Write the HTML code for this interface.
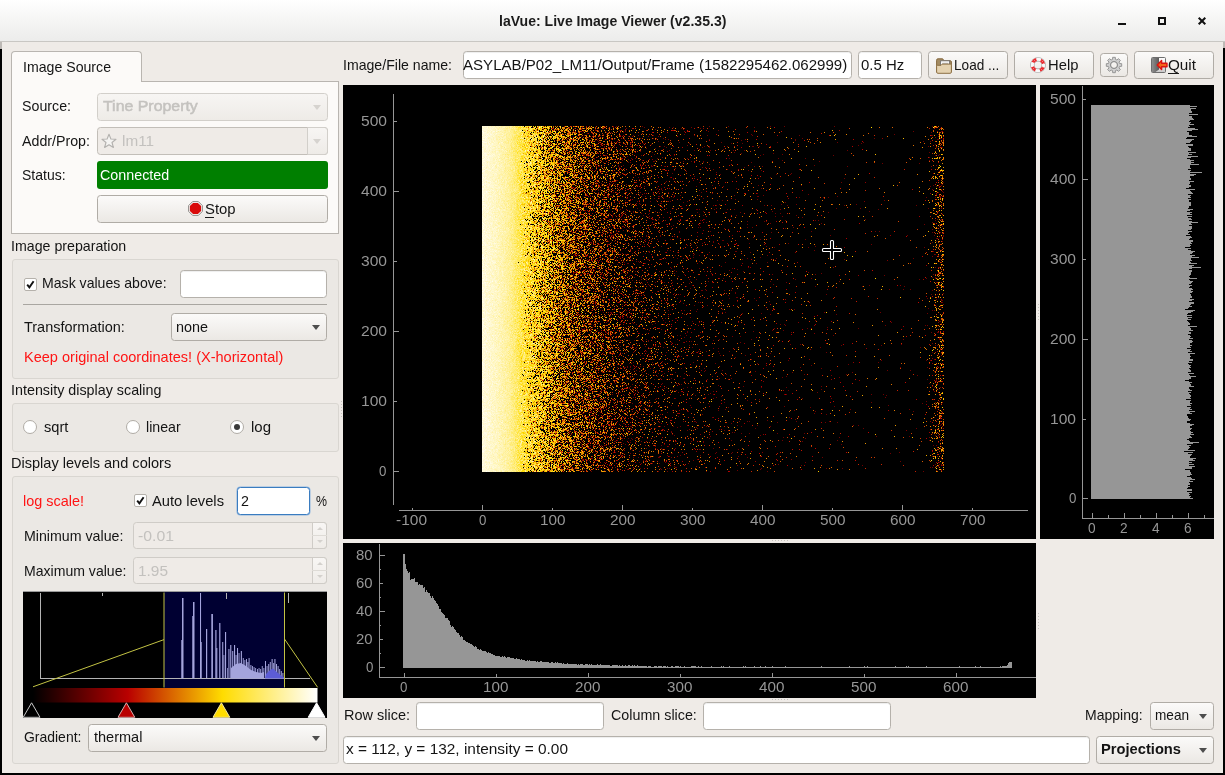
<!DOCTYPE html>
<html><head><meta charset="utf-8"><title>laVue</title>
<style>
html,body{margin:0;padding:0}
body{width:1225px;height:775px;overflow:hidden;background:#efebe7;position:relative;font-family:"Liberation Sans",sans-serif;font-size:15px;line-height:18px}
.a{position:absolute;box-sizing:border-box}
.t{position:absolute;white-space:pre;line-height:18px;height:18px;transform-origin:0 50%;display:inline-block}
.t u{text-decoration:underline;text-underline-offset:2px;text-decoration-thickness:1px}
.btn{position:absolute;box-sizing:border-box;border:1px solid #b0aca6;border-radius:3.5px;background:linear-gradient(#fbfaf9,#ebe8e4)}
.btn.dis{border-color:#d2cfca;background:linear-gradient(#f7f5f3,#eeebe7)}
.le{position:absolute;box-sizing:border-box;border:1px solid #b5b1ab;border-radius:3.5px;background:#fff;box-shadow:inset 0 1px 1px rgba(0,0,0,0.07)}
.gb{position:absolute;box-sizing:border-box;border:1px solid #d9d6d1;border-radius:3px;background:#ebe8e4}
.pl{position:absolute;background:#000}
.arr{position:absolute;width:0;height:0;border-left:4.5px solid transparent;border-right:4.5px solid transparent;border-top:5px solid #4d4d4d}
.arr.dis{border-top-color:#d6d3cf}
.sb{-webkit-text-stroke:0.5px #c4c2bf}
svg{position:absolute;overflow:visible}
</style></head>
<body>
<div class='a' style='left:0;top:0;width:1225px;height:41px;background:linear-gradient(#ffffff,#f6f6f5 45%,#ececeb)'></div>
<div class='a' style='left:0;top:41px;width:1225px;height:1px;background:#c9c7c3'></div>
<div class='a' style='left:0;top:42px;width:2px;height:7px;background:#bdb9b5'></div>
<div class='a' style='left:1223px;top:42px;width:2px;height:6px;background:#bdb9b5'></div>
<div class='a' style='left:0;top:49px;width:2px;height:726px;background:#000'></div>
<div class='a' style='left:1223px;top:48px;width:2px;height:727px;background:#000'></div>
<div class='a' style='left:0;top:773px;width:1225px;height:2px;background:#000'></div>
<div class='a' style='left:1118px;top:23px;width:8px;height:2px;background:#111'></div>
<div class='a' style='left:1158px;top:17px;width:8px;height:8px;border:2px solid #111'></div>
<svg style='left:1198px;top:17px' width='8' height='8' viewBox='0 0 8 8'><path d='M0.7 0.7L7.3 7.3M7.3 0.7L0.7 7.3' stroke='#111' stroke-width='2' fill='none'/></svg>
<div class='a' style='left:11px;top:81px;width:328px;height:153px;background:#fcfaf8;border:1px solid #b9b5b0'></div>
<div class='a' style='left:11px;top:51px;width:131px;height:31px;background:#fcfaf8;border:1px solid #b9b5b0;border-bottom:none;border-radius:4px 4px 0 0'></div>
<div class='btn dis' style='left:97px;top:93px;width:231px;height:28px;'></div>
<div class='arr dis' style='left:312.5px;top:104.5px'></div>
<div class='a' style='left:97px;top:127px;width:231px;height:28px;border:1px solid #c2beb8;border-radius:3.5px;background:#efebe7'></div>
<div class='btn dis' style='left:307px;top:127px;width:21px;height:28px;border-radius:0 3.5px 3.5px 0'></div>
<div class='arr dis' style='left:312.5px;top:138.5px'></div>
<svg style='left:101px;top:132.5px' width='16' height='16' viewBox='0 0 16 16'><path d='M8 1.2 L9.9 6 L15 6.3 L11 9.5 L12.4 14.5 L8 11.7 L3.6 14.5 L5 9.5 L1 6.3 L6.1 6 Z' fill='#f4f3f1' stroke='#b3b1ae' stroke-width='1.1' stroke-linejoin='round'/></svg>
<div class='a' style='left:97px;top:161px;width:231px;height:28px;background:#007f00;border-radius:3px'></div>
<div class='btn' style='left:97px;top:195px;width:231px;height:28px;'></div>
<svg style='left:188px;top:201px' width='15' height='15' viewBox='0 0 15 15'><path d='M4.6 0.6h5.8l4 4v5.8l-4 4H4.6l-4-4V4.6z' fill='#f4f2f0' stroke='#8f8c88' stroke-width='1'/><path d='M5.1 1.9h4.8l3.2 3.2v4.8l-3.2 3.2H5.1L1.9 9.9V5.1z' fill='#d90a0a'/></svg>
<div class='a' style='left:205px;top:217px;width:9px;height:1px;background:#1a1a1a'></div>
<div class='gb' style='left:12px;top:259px;width:327px;height:120px;'></div>
<div class='a' style='left:24px;top:278px;width:13px;height:13px;background:#fff;border:1px solid #b5b1ab;border-radius:2px'></div>
<svg style='left:26px;top:280px' width='9' height='9' viewBox='0 0 9 9'><path d='M1.2 4.6L3.4 7.4L7.6 1.2' stroke='#111' stroke-width='1.9' fill='none'/></svg>
<div class='le' style='left:180px;top:270px;width:147px;height:28px;'></div>
<div class='a' style='left:23px;top:304px;width:304px;height:1px;background:#a9a6a1'></div>
<div class='btn' style='left:171px;top:313px;width:156px;height:28px;'></div>
<div class='arr' style='left:311.5px;top:324.5px'></div>
<div class='gb' style='left:12px;top:403px;width:327px;height:49px;'></div>
<div class='a' style='left:23px;top:420px;width:14px;height:14px;border:1px solid #b0aca6;border-radius:50%;background:#fff'></div>
<div class='a' style='left:126px;top:420px;width:14px;height:14px;border:1px solid #b0aca6;border-radius:50%;background:#fff'></div>
<div class='a' style='left:230px;top:420px;width:14px;height:14px;border:1px solid #b0aca6;border-radius:50%;background:#fff'><div class='a' style='left:3px;top:3px;width:6px;height:6px;border-radius:50%;background:#3a3a3a'></div></div>
<div class='gb' style='left:12px;top:476px;width:327px;height:288px;'></div>
<div class='a' style='left:134px;top:494px;width:13px;height:13px;background:#fff;border:1px solid #b5b1ab;border-radius:2px'></div>
<svg style='left:136px;top:496px' width='9' height='9' viewBox='0 0 9 9'><path d='M1.2 4.6L3.4 7.4L7.6 1.2' stroke='#111' stroke-width='1.9' fill='none'/></svg>
<div class='le' style='left:237px;top:487px;width:73px;height:28px;border:1.5px solid #3a7cc0;box-shadow:0 0 0 0.5px #8db4de'></div>
<div class='a' style='left:133px;top:522px;width:194px;height:27px;border:1px solid #cfccc7;border-radius:3.5px;background:#efebe7'></div>
<div class='a' style='left:312px;top:522px;width:15px;height:27px;border:1px solid #cfccc7;border-radius:0 3.5px 3.5px 0;background:linear-gradient(#f8f6f4,#efece8)'></div>
<div class='a' style='left:312px;top:535px;width:15px;height:1px;background:#dedbd6'></div>
<div class='a' style='left:316.5px;top:527px;width:0;height:0;border-left:3px solid transparent;border-right:3px solid transparent;border-bottom:3.5px solid #d4d1cd'></div>
<div class='a' style='left:316.5px;top:540px;width:0;height:0;border-left:3px solid transparent;border-right:3px solid transparent;border-top:3.5px solid #d4d1cd'></div>
<div class='a' style='left:133px;top:557px;width:194px;height:27px;border:1px solid #cfccc7;border-radius:3.5px;background:#efebe7'></div>
<div class='a' style='left:312px;top:557px;width:15px;height:27px;border:1px solid #cfccc7;border-radius:0 3.5px 3.5px 0;background:linear-gradient(#f8f6f4,#efece8)'></div>
<div class='a' style='left:312px;top:570px;width:15px;height:1px;background:#dedbd6'></div>
<div class='a' style='left:316.5px;top:562px;width:0;height:0;border-left:3px solid transparent;border-right:3px solid transparent;border-bottom:3.5px solid #d4d1cd'></div>
<div class='a' style='left:316.5px;top:575px;width:0;height:0;border-left:3px solid transparent;border-right:3px solid transparent;border-top:3.5px solid #d4d1cd'></div>
<div class='btn' style='left:88px;top:724px;width:239px;height:28px;'></div>
<div class='arr' style='left:311.5px;top:735.5px'></div>
<div class='le' style='left:463px;top:51px;width:389px;height:28px;overflow:hidden'></div>
<div class='le' style='left:858px;top:51px;width:64px;height:28px;'></div>
<div class='btn' style='left:928px;top:51px;width:80px;height:28px;'></div>
<div class='btn' style='left:1014px;top:51px;width:80px;height:28px;'></div>
<div class='btn' style='left:1100px;top:53px;width:28px;height:24px;'></div>
<div class='btn' style='left:1134px;top:51px;width:80px;height:28px;'></div>
<div class='a' style='left:1168px;top:73px;width:11px;height:1px;background:#1a1a1a'></div>
<div class='pl' style='left:343px;top:85px;width:693px;height:454px;'></div>
<div class='pl' style='left:1040px;top:85px;width:174px;height:454px;'></div>
<div class='pl' style='left:343px;top:543px;width:693px;height:155px;'></div>
<div class='le' style='left:416px;top:702px;width:188px;height:28px;'></div>
<div class='le' style='left:703px;top:702px;width:188px;height:28px;'></div>
<div class='btn' style='left:1150px;top:702px;width:64px;height:28px;'></div>
<div class='arr' style='left:1198.5px;top:713.5px'></div>
<div class='le' style='left:343px;top:736px;width:747px;height:28px;'></div>
<div class='btn' style='left:1096px;top:736px;width:118px;height:28px;'></div>
<div class='arr' style='left:1198.5px;top:747.5px'></div>
<svg style='left:0px;top:0px' width='1225' height='775' viewBox='0 0 1225 775' shape-rendering='crispEdges'><path d='M393.5 94V505 M393 471.5H399 M393 401.5H397 M393 331.5H399 M393 261.5H397 M393 191.5H399 M393 121.5H397 M399 510.5H1028 M412.5 510V508 M482.5 510V505 M552.5 510V508 M622.5 510V505 M692.5 510V508 M762.5 510V505 M832.5 510V508 M902.5 510V505 M972.5 510V508' stroke='#969696' stroke-width='1' fill='none'/><path d='M1082.5 86V518.5H1214 M1082 498.5H1088 M1082 419.5H1086 M1082 339.5H1088 M1082 259.5H1086 M1082 179.5H1088 M1082 99.5H1086 M1092.5 518V513 M1108.5 518V515 M1124.5 518V513 M1140.5 518V515 M1156.5 518V513 M1172.5 518V515 M1188.5 518V513 M1204.5 518V515' stroke='#969696' stroke-width='1' fill='none'/><path d='M1091 499L1091 105L1190.2 105L1190.2 106L1197.3 106L1197.3 107L1190.3 107L1190.3 108L1196.2 108L1196.2 109L1191.3 109L1191.3 110L1191.0 110L1191.0 111L1191.5 111L1191.5 112L1191.5 112L1191.5 113L1189.1 113L1189.1 114L1197.7 114L1197.7 115L1188.9 115L1188.9 116L1191.6 116L1191.6 117L1191.6 117L1191.6 118L1192.7 118L1192.7 119L1193.7 119L1193.7 120L1190.4 120L1190.4 121L1189.2 121L1189.2 122L1191.3 122L1191.3 123L1189.6 123L1189.6 124L1193.6 124L1193.6 125L1188.7 125L1188.7 126L1189.6 126L1189.6 127L1187.6 127L1187.6 128L1195.3 128L1195.3 129L1198.4 129L1198.4 130L1192.2 130L1192.2 131L1187.4 131L1187.4 132L1189.0 132L1189.0 133L1188.7 133L1188.7 134L1189.3 134L1189.3 135L1192.4 135L1192.4 136L1196.7 136L1196.7 137L1187.2 137L1187.2 138L1186.2 138L1186.2 139L1193.9 139L1193.9 140L1192.3 140L1192.3 141L1191.0 141L1191.0 142L1189.6 142L1189.6 143L1185.9 143L1185.9 144L1192.8 144L1192.8 145L1192.9 145L1192.9 146L1188.4 146L1188.4 147L1189.1 147L1189.1 148L1191.4 148L1191.4 149L1191.2 149L1191.2 150L1191.4 150L1191.4 151L1188.2 151L1188.2 152L1195.8 152L1195.8 153L1189.0 153L1189.0 154L1192.2 154L1192.2 155L1188.1 155L1188.1 156L1198.4 156L1198.4 157L1191.2 157L1191.2 158L1187.0 158L1187.0 159L1189.8 159L1189.8 160L1193.8 160L1193.8 161L1190.7 161L1190.7 162L1193.9 162L1193.9 163L1190.9 163L1190.9 164L1199.1 164L1199.1 165L1189.7 165L1189.7 166L1189.8 166L1189.8 167L1189.9 167L1189.9 168L1191.1 168L1191.1 169L1187.5 169L1187.5 170L1190.9 170L1190.9 171L1190.1 171L1190.1 172L1202.2 172L1202.2 173L1189.5 173L1189.5 174L1196.0 174L1196.0 175L1193.9 175L1193.9 176L1190.0 176L1190.0 177L1189.7 177L1189.7 178L1191.2 178L1191.2 179L1190.7 179L1190.7 180L1188.9 180L1188.9 181L1193.8 181L1193.8 182L1190.1 182L1190.1 183L1190.3 183L1190.3 184L1189.2 184L1189.2 185L1190.8 185L1190.8 186L1190.5 186L1190.5 187L1188.8 187L1188.8 188L1186.3 188L1186.3 189L1194.7 189L1194.7 190L1190.1 190L1190.1 191L1190.6 191L1190.6 192L1191.5 192L1191.5 193L1193.1 193L1193.1 194L1188.4 194L1188.4 195L1190.6 195L1190.6 196L1189.7 196L1189.7 197L1191.0 197L1191.0 198L1187.5 198L1187.5 199L1190.7 199L1190.7 200L1188.8 200L1188.8 201L1188.9 201L1188.9 202L1191.4 202L1191.4 203L1190.8 203L1190.8 204L1191.1 204L1191.1 205L1190.7 205L1190.7 206L1189.4 206L1189.4 207L1189.4 207L1189.4 208L1188.1 208L1188.1 209L1192.8 209L1192.8 210L1189.9 210L1189.9 211L1187.1 211L1187.1 212L1191.7 212L1191.7 213L1190.3 213L1190.3 214L1191.8 214L1191.8 215L1187.2 215L1187.2 216L1192.1 216L1192.1 217L1188.1 217L1188.1 218L1190.9 218L1190.9 219L1192.1 219L1192.1 220L1189.3 220L1189.3 221L1192.2 221L1192.2 222L1198.0 222L1198.0 223L1191.2 223L1191.2 224L1192.0 224L1192.0 225L1189.3 225L1189.3 226L1192.1 226L1192.1 227L1192.0 227L1192.0 228L1191.7 228L1191.7 229L1190.6 229L1190.6 230L1188.2 230L1188.2 231L1191.9 231L1191.9 232L1189.3 232L1189.3 233L1187.6 233L1187.6 234L1190.0 234L1190.0 235L1186.1 235L1186.1 236L1190.8 236L1190.8 237L1191.5 237L1191.5 238L1189.8 238L1189.8 239L1188.9 239L1188.9 240L1193.3 240L1193.3 241L1192.6 241L1192.6 242L1191.4 242L1191.4 243L1191.8 243L1191.8 244L1189.6 244L1189.6 245L1191.4 245L1191.4 246L1190.0 246L1190.0 247L1184.9 247L1184.9 248L1190.6 248L1190.6 249L1188.3 249L1188.3 250L1191.1 250L1191.1 251L1194.9 251L1194.9 252L1192.7 252L1192.7 253L1191.7 253L1191.7 254L1190.4 254L1190.4 255L1194.8 255L1194.8 256L1192.2 256L1192.2 257L1198.6 257L1198.6 258L1191.0 258L1191.0 259L1191.4 259L1191.4 260L1191.5 260L1191.5 261L1190.1 261L1190.1 262L1191.1 262L1191.1 263L1196.7 263L1196.7 264L1189.4 264L1189.4 265L1193.9 265L1193.9 266L1192.0 266L1192.0 267L1201.0 267L1201.0 268L1191.9 268L1191.9 269L1189.0 269L1189.0 270L1192.0 270L1192.0 271L1191.6 271L1191.6 272L1190.5 272L1190.5 273L1191.2 273L1191.2 274L1190.5 274L1190.5 275L1190.2 275L1190.2 276L1188.7 276L1188.7 277L1189.9 277L1189.9 278L1197.4 278L1197.4 279L1189.0 279L1189.0 280L1189.7 280L1189.7 281L1192.6 281L1192.6 282L1192.1 282L1192.1 283L1191.0 283L1191.0 284L1188.6 284L1188.6 285L1191.7 285L1191.7 286L1189.9 286L1189.9 287L1188.9 287L1188.9 288L1191.9 288L1191.9 289L1192.7 289L1192.7 290L1191.3 290L1191.3 291L1193.0 291L1193.0 292L1191.8 292L1191.8 293L1189.8 293L1189.8 294L1191.3 294L1191.3 295L1191.1 295L1191.1 296L1191.6 296L1191.6 297L1192.2 297L1192.2 298L1189.7 298L1189.7 299L1194.2 299L1194.2 300L1191.6 300L1191.6 301L1188.9 301L1188.9 302L1194.1 302L1194.1 303L1194.0 303L1194.0 304L1191.0 304L1191.0 305L1190.3 305L1190.3 306L1192.3 306L1192.3 307L1188.5 307L1188.5 308L1187.7 308L1187.7 309L1185.2 309L1185.2 310L1194.5 310L1194.5 311L1193.2 311L1193.2 312L1190.9 312L1190.9 313L1187.6 313L1187.6 314L1186.8 314L1186.8 315L1191.6 315L1191.6 316L1187.3 316L1187.3 317L1192.0 317L1192.0 318L1188.3 318L1188.3 319L1190.9 319L1190.9 320L1187.4 320L1187.4 321L1187.7 321L1187.7 322L1189.1 322L1189.1 323L1189.8 323L1189.8 324L1190.0 324L1190.0 325L1187.8 325L1187.8 326L1197.0 326L1197.0 327L1189.9 327L1189.9 328L1190.6 328L1190.6 329L1190.7 329L1190.7 330L1192.7 330L1192.7 331L1188.5 331L1188.5 332L1191.3 332L1191.3 333L1191.4 333L1191.4 334L1188.2 334L1188.2 335L1189.9 335L1189.9 336L1191.2 336L1191.2 337L1189.6 337L1189.6 338L1192.5 338L1192.5 339L1189.4 339L1189.4 340L1191.9 340L1191.9 341L1192.6 341L1192.6 342L1192.4 342L1192.4 343L1190.2 343L1190.2 344L1189.8 344L1189.8 345L1191.8 345L1191.8 346L1189.5 346L1189.5 347L1191.0 347L1191.0 348L1187.4 348L1187.4 349L1190.8 349L1190.8 350L1189.6 350L1189.6 351L1191.9 351L1191.9 352L1188.1 352L1188.1 353L1195.0 353L1195.0 354L1189.9 354L1189.9 355L1189.5 355L1189.5 356L1190.8 356L1190.8 357L1189.9 357L1189.9 358L1189.8 358L1189.8 359L1192.8 359L1192.8 360L1192.6 360L1192.6 361L1189.4 361L1189.4 362L1191.5 362L1191.5 363L1188.4 363L1188.4 364L1188.9 364L1188.9 365L1190.6 365L1190.6 366L1190.1 366L1190.1 367L1191.0 367L1191.0 368L1189.3 368L1189.3 369L1190.4 369L1190.4 370L1191.4 370L1191.4 371L1190.7 371L1190.7 372L1187.5 372L1187.5 373L1194.2 373L1194.2 374L1188.9 374L1188.9 375L1189.8 375L1189.8 376L1195.6 376L1195.6 377L1191.2 377L1191.2 378L1191.2 378L1191.2 379L1189.4 379L1189.4 380L1185.0 380L1185.0 381L1189.1 381L1189.1 382L1191.9 382L1191.9 383L1190.4 383L1190.4 384L1190.8 384L1190.8 385L1190.5 385L1190.5 386L1193.5 386L1193.5 387L1188.9 387L1188.9 388L1189.3 388L1189.3 389L1189.6 389L1189.6 390L1192.0 390L1192.0 391L1188.2 391L1188.2 392L1190.7 392L1190.7 393L1189.4 393L1189.4 394L1190.3 394L1190.3 395L1191.2 395L1191.2 396L1191.2 396L1191.2 397L1190.0 397L1190.0 398L1191.1 398L1191.1 399L1185.6 399L1185.6 400L1191.2 400L1191.2 401L1190.1 401L1190.1 402L1189.8 402L1189.8 403L1192.3 403L1192.3 404L1190.1 404L1190.1 405L1191.3 405L1191.3 406L1186.6 406L1186.6 407L1190.5 407L1190.5 408L1190.3 408L1190.3 409L1192.3 409L1192.3 410L1188.7 410L1188.7 411L1194.9 411L1194.9 412L1190.3 412L1190.3 413L1191.9 413L1191.9 414L1187.1 414L1187.1 415L1186.9 415L1186.9 416L1187.6 416L1187.6 417L1188.2 417L1188.2 418L1188.8 418L1188.8 419L1191.1 419L1191.1 420L1189.7 420L1189.7 421L1187.4 421L1187.4 422L1186.8 422L1186.8 423L1189.7 423L1189.7 424L1194.1 424L1194.1 425L1191.7 425L1191.7 426L1189.9 426L1189.9 427L1189.5 427L1189.5 428L1192.2 428L1192.2 429L1191.2 429L1191.2 430L1190.0 430L1190.0 431L1190.6 431L1190.6 432L1192.6 432L1192.6 433L1190.9 433L1190.9 434L1194.0 434L1194.0 435L1189.7 435L1189.7 436L1190.8 436L1190.8 437L1191.5 437L1191.5 438L1189.0 438L1189.0 439L1187.3 439L1187.3 440L1189.1 440L1189.1 441L1189.7 441L1189.7 442L1199.1 442L1199.1 443L1192.5 443L1192.5 444L1187.4 444L1187.4 445L1191.0 445L1191.0 446L1188.9 446L1188.9 447L1189.5 447L1189.5 448L1189.1 448L1189.1 449L1188.4 449L1188.4 450L1194.8 450L1194.8 451L1183.9 451L1183.9 452L1193.0 452L1193.0 453L1187.5 453L1187.5 454L1192.1 454L1192.1 455L1191.4 455L1191.4 456L1190.1 456L1190.1 457L1190.1 457L1190.1 458L1196.1 458L1196.1 459L1193.3 459L1193.3 460L1195.0 460L1195.0 461L1189.4 461L1189.4 462L1192.4 462L1192.4 463L1188.9 463L1188.9 464L1193.9 464L1193.9 465L1189.2 465L1189.2 466L1195.2 466L1195.2 467L1191.6 467L1191.6 468L1192.1 468L1192.1 469L1185.2 469L1185.2 470L1190.2 470L1190.2 471L1189.5 471L1189.5 472L1191.3 472L1191.3 473L1190.8 473L1190.8 474L1192.3 474L1192.3 475L1189.8 475L1189.8 476L1187.1 476L1187.1 477L1191.1 477L1191.1 478L1191.8 478L1191.8 479L1195.4 479L1195.4 480L1190.1 480L1190.1 481L1193.0 481L1193.0 482L1189.0 482L1189.0 483L1190.1 483L1190.1 484L1189.8 484L1189.8 485L1188.2 485L1188.2 486L1189.8 486L1189.8 487L1188.1 487L1188.1 488L1186.8 488L1186.8 489L1191.8 489L1191.8 490L1191.7 490L1191.7 491L1187.4 491L1187.4 492L1191.5 492L1191.5 493L1189.4 493L1189.4 494L1190.4 494L1190.4 495L1188.6 495L1188.6 496L1191.0 496L1191.0 497L1189.8 497L1189.8 498L1192.6 498L1192.6 499L1091 499Z' fill='#969696'/><path d='M379.5 544V677.5H1036 M379 667.5H385 M379 653.5H381 M379 639.5H383 M379 625.5H381 M379 611.5H385 M379 597.5H381 M379 583.5H383 M379 569.5H381 M379 555.5H385 M404.5 677V673 M496.5 677V674 M588.5 677V673 M680.5 677V674 M772.5 677V673 M864.5 677V674 M956.5 677V673' stroke='#969696' stroke-width='1' fill='none'/><path d='M403 668L403 554.4L404 554.4L404 554.4L405 554.4L405 564.0L406 564.0L406 569.1L407 569.1L407 571.2L408 571.2L408 573.3L409 573.3L409 572.3L410 572.3L410 580.0L411 580.0L411 579.3L412 579.3L412 579.4L413 579.4L413 579.2L414 579.2L414 578.0L415 578.0L415 581.6L416 581.6L416 581.9L417 581.9L417 581.7L418 581.7L418 585.1L419 585.1L419 583.8L420 583.8L420 585.3L421 585.3L421 584.7L422 584.7L422 585.0L423 585.0L423 587.8L424 587.8L424 587.0L425 587.0L425 591.5L426 591.5L426 589.7L427 589.7L427 592.4L428 592.4L428 592.7L429 592.7L429 592.8L430 592.8L430 596.2L431 596.2L431 598.0L432 598.0L432 595.9L433 595.9L433 597.5L434 597.5L434 600.1L435 600.1L435 600.9L436 600.9L436 603.0L437 603.0L437 604.0L438 604.0L438 606.1L439 606.1L439 609.4L440 609.4L440 609.0L441 609.0L441 611.7L442 611.7L442 612.9L443 612.9L443 613.7L444 613.7L444 615.0L445 615.0L445 618.4L446 618.4L446 617.7L447 617.7L447 617.8L448 617.8L448 620.4L449 620.4L449 620.8L450 620.8L450 625.1L451 625.1L451 627.0L452 627.0L452 625.6L453 625.6L453 627.4L454 627.4L454 628.7L455 628.7L455 629.7L456 629.7L456 631.7L457 631.7L457 632.5L458 632.5L458 633.0L459 633.0L459 634.6L460 634.6L460 636.9L461 636.9L461 635.8L462 635.8L462 637.3L463 637.3L463 640.0L464 640.0L464 639.7L465 639.7L465 641.1L466 641.1L466 641.7L467 641.7L467 641.8L468 641.8L468 643.1L469 643.1L469 642.5L470 642.5L470 644.0L471 644.0L471 643.9L472 643.9L472 644.8L473 644.8L473 645.8L474 645.8L474 646.7L475 646.7L475 646.4L476 646.4L476 646.9L477 646.9L477 648.6L478 648.6L478 648.5L479 648.5L479 649.6L480 649.6L480 649.0L481 649.0L481 649.8L482 649.8L482 650.8L483 650.8L483 650.8L484 650.8L484 651.0L485 651.0L485 651.1L486 651.1L486 652.2L487 652.2L487 652.5L488 652.5L488 652.2L489 652.2L489 653.0L490 653.0L490 653.4L491 653.4L491 654.2L492 654.2L492 654.3L493 654.3L493 655.0L494 655.0L494 655.2L495 655.2L495 655.5L496 655.5L496 655.8L497 655.8L497 656.0L498 656.0L498 656.4L499 656.4L499 656.0L500 656.0L500 656.7L501 656.7L501 656.5L502 656.5L502 656.4L503 656.4L503 656.7L504 656.7L504 656.1L505 656.1L505 657.4L506 657.4L506 657.6L507 657.6L507 656.8L508 656.8L508 657.1L509 657.1L509 657.3L510 657.3L510 657.7L511 657.7L511 658.3L512 658.3L512 658.1L513 658.1L513 657.8L514 657.8L514 658.5L515 658.5L515 658.6L516 658.6L516 658.3L517 658.3L517 658.9L518 658.9L518 659.0L519 659.0L519 659.1L520 659.1L520 659.7L521 659.7L521 659.0L522 659.0L522 659.7L523 659.7L523 659.8L524 659.8L524 659.8L525 659.8L525 660.8L526 660.8L526 660.5L527 660.5L527 660.2L528 660.2L528 660.8L529 660.8L529 660.2L530 660.2L530 660.6L531 660.6L531 660.9L532 660.9L532 660.7L533 660.7L533 661.0L534 661.0L534 660.8L535 660.8L535 661.0L536 661.0L536 661.6L537 661.6L537 660.9L538 660.9L538 661.6L539 661.6L539 661.9L540 661.9L540 661.1L541 661.1L541 661.4L542 661.4L542 661.8L543 661.8L543 661.7L544 661.7L544 662.1L545 662.1L545 661.9L546 661.9L546 661.9L547 661.9L547 661.8L548 661.8L548 661.9L549 661.9L549 662.6L550 662.6L550 662.6L551 662.6L551 662.0L552 662.0L552 662.4L553 662.4L553 662.6L554 662.6L554 663.4L555 663.4L555 662.0L556 662.0L556 662.7L557 662.7L557 662.3L558 662.3L558 662.9L559 662.9L559 662.5L560 662.5L560 662.8L561 662.8L561 663.2L562 663.2L562 663.6L563 663.6L563 663.1L564 663.1L564 663.6L565 663.6L565 663.5L566 663.5L566 663.8L567 663.8L567 663.2L568 663.2L568 663.6L569 663.6L569 663.6L570 663.6L570 663.5L571 663.5L571 663.7L572 663.7L572 663.6L573 663.6L573 663.5L574 663.5L574 664.2L575 664.2L575 664.0L576 664.0L576 664.1L577 664.1L577 664.5L578 664.5L578 664.1L579 664.1L579 664.5L580 664.5L580 664.2L581 664.2L581 664.1L582 664.1L582 664.0L583 664.0L583 664.7L584 664.7L584 664.7L585 664.7L585 664.3L586 664.3L586 664.1L587 664.1L587 664.3L588 664.3L588 664.6L589 664.6L589 664.4L590 664.4L590 665.0L591 665.0L591 664.0L592 664.0L592 664.8L593 664.8L593 664.8L594 664.8L594 664.6L595 664.6L595 665.1L596 665.1L596 665.2L597 665.2L597 664.2L598 664.2L598 664.5L599 664.5L599 664.9L600 664.9L600 664.4L601 664.4L601 664.9L602 664.9L602 665.0L603 665.0L603 665.2L604 665.2L604 665.0L605 665.0L605 665.2L606 665.2L606 665.1L607 665.1L607 664.6L608 664.6L608 665.1L609 665.1L609 665.2L610 665.2L610 665.6L611 665.6L611 665.6L612 665.6L612 665.0L613 665.0L613 664.9L614 664.9L614 664.8L615 664.8L615 665.2L616 665.2L616 664.6L617 664.6L617 665.4L618 665.4L618 665.5L619 665.5L619 665.3L620 665.3L620 665.9L621 665.9L621 665.7L622 665.7L622 665.3L623 665.3L623 665.8L624 665.8L624 665.7L625 665.7L625 665.4L626 665.4L626 665.6L627 665.6L627 665.5L628 665.5L628 665.4L629 665.4L629 665.2L630 665.2L630 665.8L631 665.8L631 665.5L632 665.5L632 665.4L633 665.4L633 665.5L634 665.5L634 664.9L635 664.9L635 665.9L636 665.9L636 665.8L637 665.8L637 665.3L638 665.3L638 666.3L639 666.3L639 665.8L640 665.8L640 666.0L641 666.0L641 665.6L642 665.6L642 665.9L643 665.9L643 666.4L644 666.4L644 666.0L645 666.0L645 666.0L646 666.0L646 666.3L647 666.3L647 666.8L648 666.8L648 666.0L649 666.0L649 666.4L650 666.4L650 665.6L651 665.6L651 666.5L652 666.5L652 666.7L653 666.7L653 666.6L654 666.6L654 666.1L655 666.1L655 666.3L656 666.3L656 666.0L657 666.0L657 666.6L658 666.6L658 665.9L659 665.9L659 666.1L660 666.1L660 666.0L661 666.0L661 666.3L662 666.3L662 666.7L663 666.7L663 666.1L664 666.1L664 666.3L665 666.3L665 666.3L666 666.3L666 666.9L667 666.9L667 666.3L668 666.3L668 666.5L669 666.5L669 666.7L670 666.7L670 666.8L671 666.8L671 666.4L672 666.4L672 666.4L673 666.4L673 666.6L674 666.6L674 666.5L675 666.5L675 666.4L676 666.4L676 666.3L677 666.3L677 666.4L678 666.4L678 666.3L679 666.3L679 666.7L680 666.7L680 666.2L681 666.2L681 666.9L682 666.9L682 666.5L683 666.5L683 666.7L684 666.7L684 666.3L685 666.3L685 666.9L686 666.9L686 666.8L687 666.8L687 666.6L688 666.6L688 666.5L689 666.5L689 666.9L690 666.9L690 666.8L691 666.8L691 666.2L692 666.2L692 666.1L693 666.1L693 666.1L694 666.1L694 666.3L695 666.3L695 666.2L696 666.2L696 666.6L697 666.6L697 666.8L698 666.8L698 666.3L699 666.3L699 666.6L700 666.6L700 666.9L701 666.9L701 666.1L702 666.1L702 666.7L703 666.7L703 666.9L704 666.9L704 666.8L705 666.8L705 666.9L706 666.9L706 666.7L707 666.7L707 666.8L708 666.8L708 666.5L709 666.5L709 666.5L710 666.5L710 666.9L711 666.9L711 666.1L712 666.1L712 666.9L713 666.9L713 666.9L714 666.9L714 666.9L715 666.9L715 666.9L716 666.9L716 666.9L717 666.9L717 666.9L718 666.9L718 666.9L719 666.9L719 666.9L720 666.9L720 666.5L721 666.5L721 666.4L722 666.4L722 666.6L723 666.6L723 666.4L724 666.4L724 666.7L725 666.7L725 666.7L726 666.7L726 666.9L727 666.9L727 666.9L728 666.9L728 666.9L729 666.9L729 666.4L730 666.4L730 666.5L731 666.5L731 666.8L732 666.8L732 666.9L733 666.9L733 666.8L734 666.8L734 666.7L735 666.7L735 666.7L736 666.7L736 666.6L737 666.6L737 666.9L738 666.9L738 666.9L739 666.9L739 666.7L740 666.7L740 666.9L741 666.9L741 666.6L742 666.6L742 666.9L743 666.9L743 666.2L744 666.2L744 666.6L745 666.6L745 666.4L746 666.4L746 666.8L747 666.8L747 666.9L748 666.9L748 666.5L749 666.5L749 666.9L750 666.9L750 666.8L751 666.8L751 666.9L752 666.9L752 666.8L753 666.8L753 666.7L754 666.7L754 666.1L755 666.1L755 666.9L756 666.9L756 666.9L757 666.9L757 666.9L758 666.9L758 666.9L759 666.9L759 666.9L760 666.9L760 666.3L761 666.3L761 666.7L762 666.7L762 666.7L763 666.7L763 666.6L764 666.6L764 666.9L765 666.9L765 666.4L766 666.4L766 666.9L767 666.9L767 666.5L768 666.5L768 666.7L769 666.7L769 666.6L770 666.6L770 666.8L771 666.8L771 666.8L772 666.8L772 666.4L773 666.4L773 666.9L774 666.9L774 666.8L775 666.8L775 666.6L776 666.6L776 666.9L777 666.9L777 666.8L778 666.8L778 666.5L779 666.5L779 666.6L780 666.6L780 666.8L781 666.8L781 666.9L782 666.9L782 666.8L783 666.8L783 666.9L784 666.9L784 666.7L785 666.7L785 666.3L786 666.3L786 666.7L787 666.7L787 666.9L788 666.9L788 666.9L789 666.9L789 666.6L790 666.6L790 666.9L791 666.9L791 666.9L792 666.9L792 666.9L793 666.9L793 666.8L794 666.8L794 666.9L795 666.9L795 666.7L796 666.7L796 666.9L797 666.9L797 666.9L798 666.9L798 666.7L799 666.7L799 666.9L800 666.9L800 666.9L801 666.9L801 666.9L802 666.9L802 666.9L803 666.9L803 666.7L804 666.7L804 666.9L805 666.9L805 666.9L806 666.9L806 666.8L807 666.8L807 666.9L808 666.9L808 666.9L809 666.9L809 666.9L810 666.9L810 666.9L811 666.9L811 666.6L812 666.6L812 666.9L813 666.9L813 666.9L814 666.9L814 666.9L815 666.9L815 666.9L816 666.9L816 666.6L817 666.6L817 666.9L818 666.9L818 666.9L819 666.9L819 666.9L820 666.9L820 666.9L821 666.9L821 666.3L822 666.3L822 666.9L823 666.9L823 666.9L824 666.9L824 666.7L825 666.7L825 666.9L826 666.9L826 666.9L827 666.9L827 666.5L828 666.5L828 666.9L829 666.9L829 666.7L830 666.7L830 666.9L831 666.9L831 666.9L832 666.9L832 666.9L833 666.9L833 666.5L834 666.5L834 666.9L835 666.9L835 666.9L836 666.9L836 666.9L837 666.9L837 666.7L838 666.7L838 666.9L839 666.9L839 666.9L840 666.9L840 666.9L841 666.9L841 666.6L842 666.6L842 666.8L843 666.8L843 666.9L844 666.9L844 666.6L845 666.6L845 666.6L846 666.6L846 666.9L847 666.9L847 666.9L848 666.9L848 666.9L849 666.9L849 666.4L850 666.4L850 666.6L851 666.6L851 666.9L852 666.9L852 666.9L853 666.9L853 666.9L854 666.9L854 666.8L855 666.8L855 666.8L856 666.8L856 666.9L857 666.9L857 666.9L858 666.9L858 666.8L859 666.8L859 666.9L860 666.9L860 666.9L861 666.9L861 666.9L862 666.9L862 666.9L863 666.9L863 666.8L864 666.8L864 666.3L865 666.3L865 666.9L866 666.9L866 666.9L867 666.9L867 666.4L868 666.4L868 666.9L869 666.9L869 666.8L870 666.8L870 666.9L871 666.9L871 666.9L872 666.9L872 666.5L873 666.5L873 666.9L874 666.9L874 666.6L875 666.6L875 666.9L876 666.9L876 666.7L877 666.7L877 666.7L878 666.7L878 666.7L879 666.7L879 666.6L880 666.6L880 666.9L881 666.9L881 666.9L882 666.9L882 666.9L883 666.9L883 666.9L884 666.9L884 666.9L885 666.9L885 666.9L886 666.9L886 666.9L887 666.9L887 666.9L888 666.9L888 666.5L889 666.5L889 666.9L890 666.9L890 666.8L891 666.8L891 666.7L892 666.7L892 666.9L893 666.9L893 666.9L894 666.9L894 666.8L895 666.8L895 666.3L896 666.3L896 666.8L897 666.8L897 666.9L898 666.9L898 666.9L899 666.9L899 666.9L900 666.9L900 666.9L901 666.9L901 666.6L902 666.6L902 666.7L903 666.7L903 666.6L904 666.6L904 666.9L905 666.9L905 666.9L906 666.9L906 666.3L907 666.3L907 666.7L908 666.7L908 666.1L909 666.1L909 666.8L910 666.8L910 666.8L911 666.8L911 666.9L912 666.9L912 666.9L913 666.9L913 666.7L914 666.7L914 666.5L915 666.5L915 666.7L916 666.7L916 666.9L917 666.9L917 666.8L918 666.8L918 666.7L919 666.7L919 666.9L920 666.9L920 666.5L921 666.5L921 666.9L922 666.9L922 666.9L923 666.9L923 666.7L924 666.7L924 666.6L925 666.6L925 666.7L926 666.7L926 666.4L927 666.4L927 666.9L928 666.9L928 666.8L929 666.8L929 666.8L930 666.8L930 666.7L931 666.7L931 666.9L932 666.9L932 666.6L933 666.6L933 666.9L934 666.9L934 666.9L935 666.9L935 666.9L936 666.9L936 666.9L937 666.9L937 666.9L938 666.9L938 666.9L939 666.9L939 666.9L940 666.9L940 666.9L941 666.9L941 666.9L942 666.9L942 666.9L943 666.9L943 666.7L944 666.7L944 666.7L945 666.7L945 666.7L946 666.7L946 666.9L947 666.9L947 666.6L948 666.6L948 666.8L949 666.8L949 666.9L950 666.9L950 666.9L951 666.9L951 666.5L952 666.5L952 666.9L953 666.9L953 666.6L954 666.6L954 666.9L955 666.9L955 666.6L956 666.6L956 666.5L957 666.5L957 666.9L958 666.9L958 666.9L959 666.9L959 666.3L960 666.3L960 666.9L961 666.9L961 666.6L962 666.6L962 666.9L963 666.9L963 666.9L964 666.9L964 666.7L965 666.7L965 666.6L966 666.6L966 666.9L967 666.9L967 666.9L968 666.9L968 666.9L969 666.9L969 666.9L970 666.9L970 666.9L971 666.9L971 666.7L972 666.7L972 666.6L973 666.6L973 666.7L974 666.7L974 666.8L975 666.8L975 666.2L976 666.2L976 666.9L977 666.9L977 666.9L978 666.9L978 666.9L979 666.9L979 666.7L980 666.7L980 666.4L981 666.4L981 666.5L982 666.5L982 666.9L983 666.9L983 666.5L984 666.5L984 666.6L985 666.6L985 666.6L986 666.6L986 666.9L987 666.9L987 666.9L988 666.9L988 666.9L989 666.9L989 666.8L990 666.8L990 666.7L991 666.7L991 666.6L992 666.6L992 666.7L993 666.7L993 666.7L994 666.7L994 666.9L995 666.9L995 666.9L996 666.9L996 666.9L997 666.9L997 666.9L998 666.9L998 666.8L999 666.8L999 666.6L1000 666.6L1000 666.4L1001 666.4L1001 666.6L1002 666.6L1002 666.4L1003 666.4L1003 665.8L1004 665.8L1004 665.7L1005 665.7L1005 666.0L1006 666.0L1006 665.6L1007 665.6L1007 664.8L1008 664.8L1008 662.6L1009 662.6L1009 661.9L1010 661.9L1010 661.8L1011 661.8L1011 662.1L1012 662.1L1012 668Z' fill='#969696'/></svg>
<svg style='left:482px;top:126px' width='462' height='346' viewBox='0 0 462 346'>
<defs><linearGradient id='gg' x1='0' x2='1' y1='0' y2='0'><stop offset='0.0000' stop-color='rgb(246,55,0)'/><stop offset='0.0346' stop-color='rgb(227,60,0)'/><stop offset='0.0584' stop-color='rgb(207,66,0)'/><stop offset='0.0714' stop-color='rgb(183,82,0)'/><stop offset='0.0801' stop-color='rgb(150,128,50)'/><stop offset='0.0887' stop-color='rgb(116,182,66)'/><stop offset='0.0974' stop-color='rgb(92,219,76)'/><stop offset='0.1082' stop-color='rgb(76,237,87)'/><stop offset='0.1190' stop-color='rgb(70,237,95)'/><stop offset='0.1320' stop-color='rgb(63,237,103)'/><stop offset='0.1472' stop-color='rgb(59,228,112)'/><stop offset='0.1732' stop-color='rgb(59,200,120)'/><stop offset='0.2056' stop-color='rgb(59,182,128)'/><stop offset='0.2489' stop-color='rgb(65,155,137)'/><stop offset='0.3030' stop-color='rgb(69,137,149)'/><stop offset='0.3571' stop-color='rgb(71,128,161)'/><stop offset='0.4221' stop-color='rgb(70,128,170)'/><stop offset='0.5087' stop-color='rgb(70,128,178)'/><stop offset='0.6494' stop-color='rgb(70,128,185)'/><stop offset='0.8225' stop-color='rgb(70,128,196)'/><stop offset='0.9481' stop-color='rgb(70,128,197)'/><stop offset='0.9632' stop-color='rgb(65,146,183)'/><stop offset='0.9740' stop-color='rgb(59,164,168)'/><stop offset='0.9827' stop-color='rgb(61,164,154)'/><stop offset='0.9913' stop-color='rgb(63,164,142)'/><stop offset='1.0000' stop-color='rgb(63,164,139)'/></linearGradient>
<filter id='nz' x='0' y='0' width='100%' height='100%' color-interpolation-filters='sRGB'>
<feTurbulence type='fractalNoise' baseFrequency='2.3137 2.7419' numOctaves='2' seed='11' result='t'/>
<feColorMatrix in='t' type='matrix' values='1 0 0 0 0 1 0 0 0 0 1 0 0 0 0 0 0 0 0 1' result='n1'/>
<feColorMatrix in='t' type='matrix' values='0 1 0 0 0 0 1 0 0 0 0 1 0 0 0 0 0 0 0 1' result='n2'/>
<feColorMatrix in='SourceGraphic' type='matrix' values='1 0 0 0 0 1 0 0 0 0 1 0 0 0 0 0 0 0 0 1' result='M'/>
<feColorMatrix in='SourceGraphic' type='matrix' values='0 1 0 0 0 0 1 0 0 0 0 1 0 0 0 0 0 0 0 1' result='S'/>
<feColorMatrix in='SourceGraphic' type='matrix' values='0 0 1 0 0 0 0 1 0 0 0 0 1 0 0 0 0 0 0 1' result='Th'/>
<feComposite in='S' in2='n2' operator='arithmetic' k1='1' k2='0' k3='0' k4='0' result='P'/>
<feComposite in='M' in2='P' operator='arithmetic' k1='0' k2='1.5' k3='1.4' k4='-0.7' result='v'/>
<feComponentTransfer in='v' result='col'><feFuncR type='table' tableValues='0.435 0.609 0.682 0.73 0.747 0.763 0.777 0.79 0.802 0.813 0.824 0.834 0.844 0.853 0.862 0.871 0.879 0.887 0.895 0.903 0.91 0.918 0.925 0.932 0.938 0.945 0.952 0.958 0.964 0.97 0.977 0.983 0.988 0.994 1 1 1 1 1 1 1 1 1 1 1 1 1 1 1 1 1 1 1 1 1 1 1 1 1 1 1 1 1 1 1 1 1 1 1 1 1 1 1 1 1 1 1 1 1 1 1 1 1 1 1 1 1 1 1 1 1 1 1 1 1 1 1 1 1 1 1'/><feFuncG type='table' tableValues='0 0 0 0.014 0.069 0.118 0.162 0.203 0.241 0.276 0.31 0.342 0.372 0.401 0.43 0.457 0.483 0.509 0.533 0.557 0.581 0.604 0.626 0.648 0.669 0.69 0.711 0.731 0.751 0.77 0.789 0.808 0.826 0.844 0.862 0.865 0.868 0.871 0.874 0.876 0.879 0.882 0.884 0.887 0.889 0.892 0.894 0.896 0.899 0.901 0.904 0.906 0.908 0.91 0.913 0.915 0.917 0.919 0.921 0.924 0.926 0.928 0.93 0.932 0.934 0.936 0.938 0.94 0.942 0.944 0.946 0.948 0.95 0.952 0.954 0.956 0.958 0.96 0.962 0.963 0.965 0.967 0.969 0.971 0.972 0.974 0.976 0.978 0.98 0.981 0.983 0.985 0.987 0.988 0.99 0.992 0.993 0.995 0.997 0.998 1'/><feFuncB type='table' tableValues='0 0 0 0 0 0 0 0 0 0 0 0 0 0 0 0 0 0 0 0 0 0 0 0 0 0 0 0 0 0 0 0 0 0 0 0.02 0.04 0.06 0.079 0.099 0.118 0.137 0.155 0.174 0.192 0.21 0.228 0.245 0.263 0.28 0.297 0.314 0.331 0.347 0.364 0.38 0.396 0.412 0.428 0.443 0.459 0.474 0.49 0.505 0.52 0.535 0.55 0.564 0.579 0.594 0.608 0.622 0.636 0.651 0.665 0.678 0.692 0.706 0.72 0.733 0.747 0.76 0.773 0.787 0.8 0.813 0.826 0.839 0.851 0.864 0.877 0.889 0.902 0.914 0.927 0.939 0.952 0.964 0.976 0.988 1'/></feComponentTransfer>
<feComposite in='n1' in2='Th' operator='arithmetic' k1='0' k2='1' k3='-1' k4='1' result='d'/>
<feComponentTransfer in='d' result='mask'><feFuncR type='linear' slope='255' intercept='-254'/><feFuncG type='linear' slope='255' intercept='-254'/><feFuncB type='linear' slope='255' intercept='-254'/></feComponentTransfer>
<feComposite in='col' in2='mask' operator='arithmetic' k1='1' k2='0' k3='0' k4='0'/>
</filter></defs>
<rect width='462' height='346' fill='url(#gg)' filter='url(#nz)'/>
</svg>
<svg style='left:0;top:0' width='1225' height='775' viewBox='0 0 1225 775'><path d='M830.5 241.5q0-1 1-1h1q1 0 1 1v7h7q1 0 1 1v1q0 1-1 1h-7v7q0 1-1 1h-1q-1 0-1-1v-7h-7q-1 0-1-1v-1q0-1 1-1h7z' fill='#000' stroke='#fff' stroke-width='1.1'/></svg>
<div class='a' style='left:23px;top:591px;width:304px;height:127px;background:#000;border-top:1px solid #9a9a9a'></div><svg style='left:0;top:0' width='1225' height='775' viewBox='0 0 1225 775'><defs><linearGradient id='th' x1='0' x2='1'><stop offset='0' stop-color='#000'/><stop offset='0.3333' stop-color='rgb(185,0,0)'/><stop offset='0.6666' stop-color='rgb(255,220,0)'/><stop offset='1' stop-color='#fff'/></linearGradient></defs><rect x='164' y='592' width='121' height='95.5' fill='rgb(0,0,50)' shape-rendering='crispEdges'/><path d='M40.5 593V678.5H310 M102.5 593V596 M226.5 593V599 M288.5 593V603' stroke='#b4b4b4' stroke-width='1' fill='none' shape-rendering='crispEdges'/><path d='M182 678.5V598h1.50V678.5zM181 678.5V640h0.75V678.5zM193 678.5V602h1.50V678.5zM192 678.5V616h0.75V678.5zM200 678.5V593h1.05V678.5zM201 678.5V642h0.75V678.5zM206 678.5V629h1.20V678.5zM211.3 678.5V614h1.65V678.5zM215.3 678.5V630h1.20V678.5zM216.6 678.5V648h0.75V678.5zM219.2 678.5V623h1.20V678.5zM222.2 678.5V642h1.05V678.5zM223.6 678.5V655h0.75V678.5zM225 678.5V632h1.12V678.5zM227 678.5V668h0.75V678.5zM228.4 678.5V649h1.05V678.5zM230.2 678.5V645h1.12V678.5zM232.2 678.5V651h1.05V678.5zM234 678.5V645h1.12V678.5zM235.6 678.5V655h0.90V678.5zM237 678.5V648h1.05V678.5zM238.6 678.5V653h0.90V678.5zM240.8 678.5V651h1.12V678.5zM242.8 678.5V658h0.90V678.5zM244.4 678.5V660h0.90V678.5zM246 678.5V659h0.98V678.5zM247.4 678.5V662h0.90V678.5zM248.6 678.5V658h0.98V678.5zM250.4 678.5V665h0.98V678.5zM252 678.5V666h0.90V678.5zM253.6 678.5V667h0.90V678.5zM255.2 678.5V668h0.90V678.5zM257 678.5V669h0.90V678.5zM258.6 678.5V668h0.90V678.5zM260.2 678.5V669h0.90V678.5zM261.8 678.5V666h0.90V678.5zM263.4 678.5V668h0.90V678.5zM265 678.5V661h0.98V678.5zM266.6 678.5V666h0.90V678.5zM268.2 678.5V664h0.98V678.5zM269.8 678.5V662h0.98V678.5zM271.6 678.5V659h1.05V678.5zM273.2 678.5V663h0.90V678.5zM274.4 678.5V659h1.05V678.5zM276 678.5V664h0.98V678.5zM277.6 678.5V666h0.98V678.5zM279.2 678.5V669h0.98V678.5zM280.8 678.5V671h0.98V678.5zM282.4 678.5V673h0.98V678.5zM284 678.5V675h0.90V678.5z' fill='#a4a4dc'/><path d='M231 678.5L231 668L236 664L241 663L246 666L251 670L256 672L261 673L264 672V678.5z' fill='#a4a4dc'/><path d='M265 678.5L266 674L268.5 671.5L271 669.5L273 668.5L275 670.5L278 673L281 675.5L284 677.5V678.5z' fill='#5c5cd6'/><path d='M164 592.5V687.5 M284.5 592.5V687.5' stroke='#c3c344' stroke-width='1' fill='none'/><path d='M164 639.6L33 686.8 M284.5 639L317.6 687.3' stroke='#c3c344' stroke-width='1' fill='none'/><rect x='33' y='688' width='284.5' height='14.5' fill='url(#th)'/><path d='M31.6 702.8L40.0 717.3H23.200000000000003z' fill='#000' stroke='#c8c8c8' stroke-width='1' stroke-linejoin='miter'/><path d='M126.4 702.8L134.8 717.3H118.0z' fill='rgb(185,0,0)' stroke='#d8b0b0' stroke-width='1' stroke-linejoin='miter'/><path d='M221.4 702.8L229.8 717.3H213.0z' fill='rgb(255,220,0)' stroke='#f4e8a0' stroke-width='1' stroke-linejoin='miter'/><path d='M316.6 702.8L325.0 717.3H308.20000000000005z' fill='#fff' stroke='#fff' stroke-width='1' stroke-linejoin='miter'/></svg>
<svg style='left:936px;top:57.5px' width='16' height='16' viewBox='0 0 16 16'>
<path d='M0.6 2.2q0-1.4 1.4-1.4h4.2q1 0 1.2 1l0.2 0.9h6.6q1.2 0 1.2 1.2v9.6h-14.8z' fill='#a38b63' stroke='#86693e' stroke-width='1'/>
<rect x='4.6' y='2.8' width='9' height='6.4' fill='#fdfdfd' stroke='#6f6f6f' stroke-width='0.9'/>
<path d='M6.2 5.3h6' stroke='#b0b0b0' stroke-width='1'/>
<path d='M0.6 8.2q0-0.9 0.9-0.9h3.6l1.1-1.2h8.2q1 0 1 1v6.9q0 1.3-1.3 1.3h-12.2q-1.3 0-1.3-1.3z' fill='#e4d2b0' stroke='#8d7044' stroke-width='1'/>
</svg>
<svg style='left:1030px;top:57px' width='16' height='16' viewBox='0 0 16 16'>
<circle cx='8' cy='8' r='5.7' fill='none' stroke='#a2a2a2' stroke-width='4.3'/>
<circle cx='8' cy='8' r='5.7' fill='none' stroke='#f8f8f8' stroke-width='3.1'/>
<circle cx='8' cy='8' r='5.7' fill='none' stroke='#ea2a2e' stroke-width='3.1' stroke-dasharray='4.477 4.477' stroke-dashoffset='-2.238'/>
<circle cx='8' cy='8' r='5.7' fill='none' stroke='#fff' stroke-opacity='0.7' stroke-width='0.8' stroke-dasharray='0.9 1.3'/>
</svg>
<svg style='left:1106px;top:57px' width='16' height='16' viewBox='0 0 16 16'>
<path d='M15.68 6.66L15.68 9.34L13.62 9.44L12.99 10.95L14.38 12.49L12.49 14.38L10.95 12.99L9.44 13.62L9.34 15.68L6.66 15.68L6.56 13.62L5.05 12.99L3.51 14.38L1.62 12.49L3.01 10.95L2.38 9.44L0.32 9.34L0.32 6.66L2.38 6.56L3.01 5.05L1.62 3.51L3.51 1.62L5.05 3.01L6.56 2.38L6.66 0.32L9.34 0.32L9.44 2.38L10.95 3.01L12.49 1.62L14.38 3.51L12.99 5.05L13.62 6.56z M8 4.5a3.5 3.5 0 1 0 0.001 0z' fill='#cfcfcf' stroke='#8f8f8f' stroke-width='0.9' fill-rule='evenodd' stroke-linejoin='round'/>
<circle cx='8' cy='8' r='3.5' fill='none' stroke='#8f8f8f' stroke-width='0.9'/>
</svg>
<svg style='left:1151px;top:57px' width='17' height='16' viewBox='0 0 17 16'>
<defs><linearGradient id='dg' x1='0' x2='1'><stop offset='0' stop-color='#8e8e8e'/><stop offset='1' stop-color='#5a5a5a'/></linearGradient>
<linearGradient id='dw' x1='0' x2='0' y1='0' y2='1'><stop offset='0' stop-color='#ffffff'/><stop offset='1' stop-color='#c9c9c9'/></linearGradient></defs>
<rect x='0.5' y='0.5' width='14' height='15' rx='1' fill='url(#dw)' stroke='#6e6e6e'/>
<path d='M1 1h7v11.5l-3.5 2.6H1z' fill='url(#dg)'/>
<path d='M6.2 8L10.6 3.4v2.8h5.4v3.6h-5.4v2.8z' fill='#f2641a' stroke='#dc1212' stroke-width='1.4' stroke-linejoin='round'/>
</svg>
<div class='a' style='left:772px;top:540px;width:1px;height:1px;background:#c6c2bd'></div>
<div class='a' style='left:775px;top:540px;width:1px;height:1px;background:#c6c2bd'></div>
<div class='a' style='left:778px;top:540px;width:1px;height:1px;background:#c6c2bd'></div>
<div class='a' style='left:781px;top:540px;width:1px;height:1px;background:#c6c2bd'></div>
<div class='a' style='left:784px;top:540px;width:1px;height:1px;background:#c6c2bd'></div>
<div class='a' style='left:787px;top:540px;width:1px;height:1px;background:#c6c2bd'></div>
<div class='a' style='left:772px;top:699px;width:1px;height:1px;background:#c6c2bd'></div>
<div class='a' style='left:775px;top:699px;width:1px;height:1px;background:#c6c2bd'></div>
<div class='a' style='left:778px;top:699px;width:1px;height:1px;background:#c6c2bd'></div>
<div class='a' style='left:781px;top:699px;width:1px;height:1px;background:#c6c2bd'></div>
<div class='a' style='left:784px;top:699px;width:1px;height:1px;background:#c6c2bd'></div>
<div class='a' style='left:787px;top:699px;width:1px;height:1px;background:#c6c2bd'></div>
<div class='a' style='left:341px;top:401px;width:1px;height:1px;background:#c6c2bd'></div>
<div class='a' style='left:341px;top:404px;width:1px;height:1px;background:#c6c2bd'></div>
<div class='a' style='left:341px;top:407px;width:1px;height:1px;background:#c6c2bd'></div>
<div class='a' style='left:341px;top:410px;width:1px;height:1px;background:#c6c2bd'></div>
<div class='a' style='left:341px;top:413px;width:1px;height:1px;background:#c6c2bd'></div>
<div class='a' style='left:341px;top:416px;width:1px;height:1px;background:#c6c2bd'></div>
<div class='a' style='left:1038px;top:304px;width:1px;height:1px;background:#c6c2bd'></div>
<div class='a' style='left:1038px;top:307px;width:1px;height:1px;background:#c6c2bd'></div>
<div class='a' style='left:1038px;top:310px;width:1px;height:1px;background:#c6c2bd'></div>
<div class='a' style='left:1038px;top:313px;width:1px;height:1px;background:#c6c2bd'></div>
<div class='a' style='left:1038px;top:316px;width:1px;height:1px;background:#c6c2bd'></div>
<div class='a' style='left:1038px;top:319px;width:1px;height:1px;background:#c6c2bd'></div>
<div class='a' style='left:1038px;top:613px;width:1px;height:1px;background:#c6c2bd'></div>
<div class='a' style='left:1038px;top:616px;width:1px;height:1px;background:#c6c2bd'></div>
<div class='a' style='left:1038px;top:619px;width:1px;height:1px;background:#c6c2bd'></div>
<div class='a' style='left:1038px;top:622px;width:1px;height:1px;background:#c6c2bd'></div>
<div class='a' style='left:1038px;top:625px;width:1px;height:1px;background:#c6c2bd'></div>
<div class='a' style='left:1038px;top:628px;width:1px;height:1px;background:#c6c2bd'></div>
<span class='t ' style='left:499.0px;top:11.6px;color:#1c1c1c;font-weight:bold;transform:scaleX(0.9372)'>laVue: Live Image Viewer (v2.35.3)</span>
<span class='t ' style='left:23.2px;top:57.8px;color:#141414;transform:scaleX(0.9423)'>Image Source</span>
<span class='t ' style='left:22.4px;top:97.4px;color:#141414;transform:scaleX(0.9477)'>Source:</span>
<span class='t sb' style='left:102.8px;top:97.4px;color:#c4c2bf;transform:scaleX(1.0594)'>Tine Property</span>
<span class='t ' style='left:22.4px;top:131.8px;color:#141414;transform:scaleX(0.9481)'>Addr/Prop:</span>
<span class='t ' style='left:121.6px;top:131.8px;color:#c3c1be;transform:scaleX(1.0189)'>lm11</span>
<span class='t ' style='left:22.4px;top:165.8px;color:#141414;transform:scaleX(0.9336)'>Status:</span>
<span class='t ' style='left:100.4px;top:165.8px;color:#ffffff;transform:scaleX(0.9537)'>Connected</span>
<span class='t ' style='left:205.4px;top:199.8px;color:#141414;transform:scaleX(0.9916)'>Stop</span>
<span class='t ' style='left:11.2px;top:236.8px;color:#141414;transform:scaleX(0.9462)'>Image preparation</span>
<span class='t ' style='left:42.4px;top:274.4px;color:#141414;transform:scaleX(0.9398)'>Mask values above:</span>
<span class='t ' style='left:23.6px;top:317.8px;color:#141414;transform:scaleX(0.9647)'>Transformation:</span>
<span class='t ' style='left:176.4px;top:317.8px;color:#141414;transform:scaleX(0.9588)'>none</span>
<span class='t ' style='left:23.6px;top:347.8px;color:#ff1414;transform:scaleX(0.9692)'>Keep original coordinates! (X-horizontal)</span>
<span class='t ' style='left:11.2px;top:380.8px;color:#141414;transform:scaleX(0.9544)'>Intensity display scaling</span>
<span class='t ' style='left:43.6px;top:417.8px;color:#141414;transform:scaleX(0.9754)'>sqrt</span>
<span class='t ' style='left:146.4px;top:417.8px;color:#141414;transform:scaleX(0.9431)'>linear</span>
<span class='t ' style='left:250.6px;top:417.8px;color:#141414;transform:scaleX(0.9984)'>log</span>
<span class='t ' style='left:11.2px;top:453.8px;color:#141414;transform:scaleX(0.9704)'>Display levels and colors</span>
<span class='t ' style='left:23.4px;top:491.8px;color:#ff1414;transform:scaleX(0.9625)'>log scale!</span>
<span class='t ' style='left:152.4px;top:491.8px;color:#141414;transform:scaleX(0.9813)'>Auto levels</span>
<span class='t ' style='left:241.0px;top:491.8px;color:#141414;transform:scaleX(0.9500)'>2</span>
<span class='t ' style='left:316.0px;top:491.8px;color:#141414;transform:scaleX(0.8244)'>%</span>
<span class='t ' style='left:23.6px;top:526.8px;color:#141414;transform:scaleX(0.9464)'>Minimum value:</span>
<span class='t ' style='left:138.0px;top:526.8px;color:#c3c1be;transform:scaleX(1.0525)'>-0.01</span>
<span class='t ' style='left:23.6px;top:561.8px;color:#141414;transform:scaleX(0.9377)'>Maximum value:</span>
<span class='t ' style='left:138.0px;top:561.8px;color:#c3c1be;transform:scaleX(1.0273)'>1.95</span>
<span class='t ' style='left:23.6px;top:728.2px;color:#141414;transform:scaleX(0.9303)'>Gradient:</span>
<span class='t ' style='left:93.6px;top:728.2px;color:#141414;transform:scaleX(0.9674)'>thermal</span>
<span class='t ' style='left:343.0px;top:55.8px;color:#141414;transform:scaleX(0.9405)'>Image/File name:</span>
<span class='t ' style='left:463.4px;top:55.8px;color:#141414;transform:scaleX(1.0045)'>ASYLAB/P02_LM11/Output/Frame (1582295462.062999)</span>
<span class='t ' style='left:861.4px;top:55.8px;color:#141414;transform:scaleX(0.9963)'>0.5 Hz</span>
<span class='t ' style='left:953.6px;top:55.8px;color:#141414;transform:scaleX(0.9071)'>Load ...</span>
<span class='t ' style='left:1047.6px;top:55.8px;color:#141414;transform:scaleX(0.9851)'>Help</span>
<span class='t ' style='left:1168.0px;top:55.8px;color:#141414;transform:scaleX(1.0176)'>Quit</span>
<span class='t ' style='left:343.6px;top:705.8px;color:#141414;transform:scaleX(0.9655)'>Row slice:</span>
<span class='t ' style='left:610.6px;top:705.8px;color:#141414;transform:scaleX(0.9530)'>Column slice:</span>
<span class='t ' style='left:1085.4px;top:705.8px;color:#141414;transform:scaleX(0.9333)'>Mapping:</span>
<span class='t ' style='left:1155.4px;top:705.8px;color:#141414;transform:scaleX(0.9059)'>mean</span>
<span class='t ' style='left:346.0px;top:740.2px;color:#141414;transform:scaleX(1.0272)'>x = 112, y = 132, intensity = 0.00</span>
<span class='t ' style='left:1100.6px;top:740.2px;color:#141414;font-weight:bold;transform:scaleX(0.9793)'>Projections</span>
<span class='t ' style='left:378.8px;top:462.1px;color:#969696;transform:scaleX(0.8869)'>0</span>
<span class='t ' style='left:361.4px;top:392.1px;color:#969696;transform:scaleX(1.0387)'>100</span>
<span class='t ' style='left:361.4px;top:322.1px;color:#969696;transform:scaleX(1.0387)'>200</span>
<span class='t ' style='left:361.4px;top:252.1px;color:#969696;transform:scaleX(1.0387)'>300</span>
<span class='t ' style='left:361.4px;top:182.1px;color:#969696;transform:scaleX(1.0387)'>400</span>
<span class='t ' style='left:361.4px;top:112.1px;color:#969696;transform:scaleX(1.0387)'>500</span>
<span class='t ' style='left:395.5px;top:511.1px;color:#969696;transform:scaleX(1.0323)'>-100</span>
<span class='t ' style='left:478.8px;top:511.1px;color:#969696;transform:scaleX(0.8869)'>0</span>
<span class='t ' style='left:539.7px;top:511.1px;color:#969696;transform:scaleX(1.0227)'>100</span>
<span class='t ' style='left:609.7px;top:511.1px;color:#969696;transform:scaleX(1.0227)'>200</span>
<span class='t ' style='left:679.7px;top:511.1px;color:#969696;transform:scaleX(1.0227)'>300</span>
<span class='t ' style='left:749.7px;top:511.1px;color:#969696;transform:scaleX(1.0227)'>400</span>
<span class='t ' style='left:819.7px;top:511.1px;color:#969696;transform:scaleX(1.0227)'>500</span>
<span class='t ' style='left:889.7px;top:511.1px;color:#969696;transform:scaleX(1.0227)'>600</span>
<span class='t ' style='left:959.7px;top:511.1px;color:#969696;transform:scaleX(1.0227)'>700</span>
<span class='t ' style='left:1069.0px;top:489.1px;color:#969696;transform:scaleX(0.8869)'>0</span>
<span class='t ' style='left:1050.4px;top:410.1px;color:#969696;transform:scaleX(1.0387)'>100</span>
<span class='t ' style='left:1050.4px;top:330.1px;color:#969696;transform:scaleX(1.0387)'>200</span>
<span class='t ' style='left:1050.4px;top:250.1px;color:#969696;transform:scaleX(1.0387)'>300</span>
<span class='t ' style='left:1050.4px;top:170.1px;color:#969696;transform:scaleX(1.0387)'>400</span>
<span class='t ' style='left:1050.4px;top:90.1px;color:#969696;transform:scaleX(1.0387)'>500</span>
<span class='t ' style='left:1087.6px;top:519.1px;color:#969696;transform:scaleX(0.9109)'>0</span>
<span class='t ' style='left:1119.6px;top:519.1px;color:#969696;transform:scaleX(0.9109)'>2</span>
<span class='t ' style='left:1151.6px;top:519.1px;color:#969696;transform:scaleX(0.9109)'>4</span>
<span class='t ' style='left:1183.6px;top:519.1px;color:#969696;transform:scaleX(0.9109)'>6</span>
<span class='t ' style='left:365.6px;top:658.1px;color:#969696;transform:scaleX(0.8869)'>0</span>
<span class='t ' style='left:356.4px;top:630.1px;color:#969696;transform:scaleX(0.9948)'>20</span>
<span class='t ' style='left:356.4px;top:602.1px;color:#969696;transform:scaleX(0.9948)'>40</span>
<span class='t ' style='left:356.4px;top:574.1px;color:#969696;transform:scaleX(0.9948)'>60</span>
<span class='t ' style='left:356.4px;top:546.1px;color:#969696;transform:scaleX(0.9948)'>80</span>
<span class='t ' style='left:400.2px;top:678.1px;color:#969696;transform:scaleX(0.8869)'>0</span>
<span class='t ' style='left:483.2px;top:678.1px;color:#969696;transform:scaleX(1.0147)'>100</span>
<span class='t ' style='left:575.2px;top:678.1px;color:#969696;transform:scaleX(1.0147)'>200</span>
<span class='t ' style='left:667.2px;top:678.1px;color:#969696;transform:scaleX(1.0147)'>300</span>
<span class='t ' style='left:759.2px;top:678.1px;color:#969696;transform:scaleX(1.0147)'>400</span>
<span class='t ' style='left:851.2px;top:678.1px;color:#969696;transform:scaleX(1.0147)'>500</span>
<span class='t ' style='left:943.2px;top:678.1px;color:#969696;transform:scaleX(1.0147)'>600</span>
</body></html>
